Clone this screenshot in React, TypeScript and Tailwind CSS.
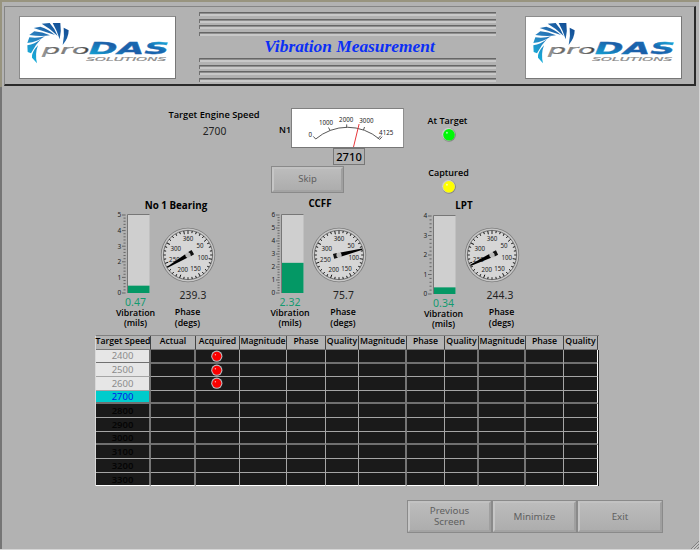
import React from "react";

const BLADES = [
  "M189 81 L204 89 Q204 112 186 133 Q192 106 189 81Z",
  "M156 67 L179 67 Q183 92 177 116 Q170 92 156 67Z",
  "M123 69 L147 67 Q163 84 171 106 Q150 84 123 69Z",
  "M99 82 L119 78 Q145 86 163 103 Q135 94 99 82Z",
  "M86 103 L101 92 Q125 93 148 104 Q120 108 86 103Z",
  "M80 127 L86 110 Q112 113 133 107 Q110 124 80 127Z",
  "M81 154 L80 134 Q102 131 121 115 Q104 132 91 158Z",
  "M94 171 Q92 155 112 134 Q102 160 109 188Z",
];

function Logo({ id }: { id: string }) {
  const f = "'DejaVu Sans', sans-serif";
  return (
    <div className="h-[63px] w-[157px] shrink-0 border border-t-[#8c8c8c] border-l-[#8c8c8c] border-r-[#777] border-b-[#777] bg-white">
      <svg width="155" height="61" viewBox="58 49 465 183">
        <defs>
          <linearGradient id={id + "b"} gradientUnits="userSpaceOnUse" x1="180" y1="70" x2="90" y2="185">
            <stop offset="0" stopColor="#124f96" />
            <stop offset="0.5" stopColor="#2a7dbd" />
            <stop offset="1" stopColor="#12b3dc" />
          </linearGradient>
          <linearGradient id={id + "d"} x1="0" y1="0.9" x2="1" y2="0.3">
            <stop offset="0" stopColor="#12a9d8" />
            <stop offset="0.5" stopColor="#1c5ea8" />
            <stop offset="0.8" stopColor="#1769b2" />
            <stop offset="1" stopColor="#1a9bd0" />
          </linearGradient>
          <linearGradient id={id + "p"} x1="0" y1="0" x2="1" y2="0">
            <stop offset="0" stopColor="#a8a8a8" />
            <stop offset="0.3" stopColor="#606060" />
            <stop offset="0.6" stopColor="#999" />
            <stop offset="1" stopColor="#333" />
          </linearGradient>
        </defs>
        {BLADES.map((d) => (
          <path key={d} d={d} fill={`url(#${id}b)`} />
        ))}
        <g transform="translate(124 160) scale(1.95 1)">
          <text x="0" y="0" fontFamily={f} fontStyle="italic" fontSize="39" textLength="73" lengthAdjust="spacingAndGlyphs" fill={`url(#${id}p)`} stroke="#777" strokeWidth="0.7">pro</text>
        </g>
        <g transform="translate(264 161) scale(2.2 1)">
          <text x="0" y="0" fontFamily={f} fontStyle="italic" fontWeight="bold" fontSize="46" textLength="110" lengthAdjust="spacingAndGlyphs" fill={`url(#${id}d)`} stroke={`url(#${id}d)`} strokeWidth="0.8">DAS</text>
        </g>
        <g transform="translate(257 182) scale(2 1)">
          <text x="0" y="0" fontFamily={f} fontStyle="italic" fontSize="18" textLength="120" lengthAdjust="spacingAndGlyphs" fill="#888" stroke="#909090" strokeWidth="0.6">SOLUTIONS</text>
        </g>
      </svg>
    </div>
  );
}

function Grooves() {
  return (
    <div className="flex flex-col gap-[2.6px]">
      {[0, 1, 2, 3].map((i) => (
        <div key={i} className="flex h-[4px] w-[297px] flex-col border-l border-[#707070] bg-[#c8c8c8]">
          <div className="h-px bg-[#666]" />
          <div className="h-px bg-[#8e8e8e]" />
        </div>
      ))}
    </div>
  );
}

function Led({ className, color }: { className?: string; color: string }) {
  return (
    <svg className={className} width="16" height="16" viewBox="0 0 16 16">
      <circle cx="8" cy="8.3" r="7.4" fill="#858585" />
      <circle cx="7.4" cy="7.7" r="6.9" fill="#cdcdcd" />
      <circle cx="8" cy="8.3" r="6.2" fill={color} />
      <circle cx="5.8" cy="6.1" r="1" fill="#fff" opacity="0.65" />
    </svg>
  );
}

function Meter() {
  const labels: [number, number, string][] = [
    [18.7, 26.7, "0"],
    [34.5, 14.3, "1000"],
    [54.7, 12, "2000"],
    [74.9, 12.8, "3000"],
    [94.7, 24.8, "4125"],
  ];
  return (
    <div className="h-[40px] w-[113px] border border-t-[#808080] border-l-[#808080] border-r-[#8e8e8e] border-b-[#777] bg-white">
      <svg width="111" height="38" viewBox="0.5 1 111 38">
        <path d="M24.2 31 A49 49 0 0 1 87.8 31" fill="none" stroke="#444" strokeWidth="0.9" />
        <path d="M24.2 31 l-2.4 -2.6 M38.6 22.5 l-1.6 -3 M55.2 19.4 v-3 M72 22 l1 -3 M86.6 30.6 l2.6 -2.9 M88 31.6 l2.6 -2.9" stroke="#444" strokeWidth="0.9" />
        {labels.map(([x, y, t]) => (
          <text key={t} x={x} y={y + 2.4} textAnchor="middle" fontFamily="'Noto Sans', sans-serif" fontSize="6.2" fill="#222">{t}</text>
        ))}
        <path d="M62 39 L67.6 16" stroke="#e8383c" strokeWidth="1" />
      </svg>
    </div>
  );
}

function Tank({ max, value, height }: { max: number; value: number; height: number }) {
  const ticks = Array.from({ length: max * 5 + 1 }, (_, i) => i);
  const py = (v: number) => 4 + height - (v / max) * height;
  return (
    <svg width="34" height={height + 8} viewBox={`0 0 34 ${height + 8}`}>
      {ticks.map((i) => (
        <line key={i} x1={i % 5 ? 7.5 : 6} x2="9.6" y1={py(i / 5)} y2={py(i / 5)} stroke="#333" strokeWidth="0.6" />
      ))}
      {Array.from({ length: max + 1 }, (_, i) => (
        <text key={i} x="5.2" y={py(i) + 2.3} textAnchor="end" fontFamily="'Noto Sans', sans-serif" fontSize="6.5" fill="#222">{i}</text>
      ))}
      <rect x="11.5" y="3.5" width="22" height={height + 0.5} fill="#cfcfcf" />
      <path d={`M11.5 ${height + 4} V3.5 H33.5`} fill="none" stroke="#777" strokeWidth="1" />
      <rect x="12" y={py(value)} width="21.5" height={height + 4 - py(value)} fill="#049865" />
    </svg>
  );
}

const DIAL_LABELS: [number, number, string][] = [
  [0, -16.2, "360"],
  [12, -9.3, "50"],
  [14.8, 2.7, "100"],
  [7.6, 13.2, "150"],
  [-5.2, 14.7, "200"],
  [-13.6, 5, "250"],
  [-12.2, -6.5, "300"],
];

function Dial({ angle }: { angle: number }) {
  return (
    <svg width="56" height="56" viewBox="-28 -28 56 56">
      <circle r="27.2" fill="#7c7c7c" />
      <circle r="26.4" fill="#c9c9c9" />
      <circle r="24.6" fill="#d6d6d6" stroke="#666" strokeWidth="0.9" />
      {Array.from({ length: 36 }, (_, i) => (
        <line key={i} x1="0" x2="0" y1="-24.4" y2={i % 5 ? -22.2 : -21} stroke="#111" strokeWidth="0.9" transform={`rotate(${i * 10})`} />
      ))}
      {DIAL_LABELS.map(([x, y, t]) => (
        <text key={t} x={x} y={y + 2.3} textAnchor="middle" fontFamily="'Noto Sans', sans-serif" fontSize="6.2" fill="#222">{t}</text>
      ))}
      <g transform={`rotate(${angle})`}>
        <path d="M-0.6 -24 L0.6 -24 L2.1 -2 L-2.1 -2Z" fill="#000" />
        <rect x="-2.5" y="1.8" width="5" height="3.8" fill="#111" />
      </g>
      <circle r="2.6" fill="#bbb" />
    </svg>
  );
}

function Channel(p: {
  title: string; max: number; value: number; phase: string; angle: number; height: number;
  top: string; titleCls: string; dialCls: string; phaseCls: string; capCls: string; vibCls: string;
}) {
  return (
    <div className={"flex w-[110px] shrink-0 flex-col " + p.top}>
      <div className={"h-[11px] text-center font-['Open_Sans',sans-serif] text-[9.8px] leading-[11px] font-bold whitespace-nowrap " + p.titleCls}>{p.title}</div>
      <div className="flex">
        <div className="flex w-[48px] shrink-0 flex-col">
          <Tank max={p.max} value={p.value} height={p.height} />
          <div className={"h-[11px] text-center text-[10.5px] leading-[11px] text-[#149a70] " + p.vibCls}>{p.value}</div>
          <div className={"text-center font-['Open_Sans',sans-serif] text-[8.8px] leading-[10px] font-semibold " + p.vibCls}>
            Vibration<br />(mils)
          </div>
        </div>
        <div className={"flex shrink-0 flex-col items-center " + p.dialCls}>
          <Dial angle={p.angle} />
          <div className={"mt-[7px] h-[11px] text-[10.3px] leading-[11px] tracking-[0.15px] text-[#222] " + p.phaseCls}>{p.phase}</div>
          <div className={"mt-[6px] text-center font-['Open_Sans',sans-serif] text-[8.8px] leading-[10.5px] font-semibold " + p.capCls}>
            Phase<br />(degs)
          </div>
        </div>
      </div>
    </div>
  );
}

const HEADS = ["Target Speed", "Actual", "Acquired", "Magnitude", "Phase", "Quality", "Magnitude", "Phase", "Quality", "Magnitude", "Phase", "Quality"];
const SPEEDS = [2400, 2500, 2600, 2700, 2800, 2900, 3000, 3100, 3200, 3300];
const COLS = "grid grid-cols-[55px_45px_44px_47px_39px_33px_48px_38px_34px_47px_38px_34px]";
const THICK_ROWS = [0, 3, 6];

function speedClass(i: number) {
  if (i < 3) return "bg-[#e6e6e6] text-[#8c8c8c]";
  if (i === 3) return "bg-[#00cccc] text-[#0018e8]";
  return "bg-[#1a1a1a] text-[#050505] font-semibold";
}

function DataTable() {
  return (
    <div className="ml-[95px] w-[504px] border-t border-l border-t-[#808080] border-l-[#d8d8d8] bg-[#1a1a1a]">
      <div className={COLS + " h-[13.5px] bg-[#b4b4b4]"}>
        {HEADS.map((h, i) => (
          <div key={i} className="flex h-[13.5px] items-center justify-center border-r border-b border-r-[#444] border-b-[#777] pb-px font-['Open_Sans',sans-serif] text-[8.7px] leading-[11px] font-semibold whitespace-nowrap">{h}</div>
        ))}
      </div>
      {SPEEDS.map((s, r) => (
        <div key={s} className={COLS + " h-[13.7px]"}>
          {HEADS.map((_, c) => (
            <div
              key={c}
              className={
                "flex items-center justify-center border-r " +
                (r === 9 ? "border-b border-b-white " : THICK_ROWS.includes(r) ? "border-b-2 border-b-[#707070] " : "border-b border-b-[#a5a5a5] ") +
                (c === 11 ? "border-r-white " : [0, 1, 6, 8, 9].includes(c) ? "border-r-2 border-r-[#757575] " : "border-r-[#a5a5a5] ") +
                (c === 0 ? speedClass(r) : "")
              }
            >
              {c === 0 && <span className="text-[9.5px] leading-[11px]">{s}</span>}
              {c === 2 && r < 3 && (
                <svg width="12" height="12" viewBox="0 0 12 12" className="-ml-[1px] shrink-0 overflow-visible">
                  <circle cx="5.8" cy="6.2" r="5.6" fill="#b9bcc0" />
                  <circle cx="5.8" cy="6.2" r="4.5" fill="#fa0000" />
                  <circle cx="4.4" cy="4.8" r="0.7" fill="#ffaaaa" />
                </svg>
              )}
            </div>
          ))}
        </div>
      ))}
    </div>
  );
}

function Btn({ children, className }: { children: React.ReactNode; className: string }) {
  return (
    <div className={"flex items-center justify-center border border-[#8a8a8a] text-center text-[#606060] " + className}>
      <div className="flex h-full w-full items-center justify-center border-2 border-t-[#c2c2c2] border-l-[#c6c6c6] border-r-[#9f9f9f] border-b-[#a3a3a3] bg-linear-to-b from-[#bcbcbc] to-[#adadad]">{children}</div>
    </div>
  );
}

export default function App() {
  return (
    <div className="flex h-[550px] w-[700px] flex-col overflow-hidden border-r border-b border-[#d6d6d6] bg-[#b2b2b2] font-['Noto_Sans',sans-serif] text-black">
      <header className="h-[87px] shrink-0 border-t-2 border-l-2 border-[#98947f] pt-[4px] pl-[2px]">
        <div className="flex h-[80px] w-[692px] items-start border-t border-r-2 border-b-2 border-l border-t-[#858585] border-l-[#858585] border-r-[#2a2a2a] border-b-[#2a2a2a]">
          <div className="mt-[8.5px] ml-[14px]"><Logo id="l" /></div>
          <div className="mt-[5px] ml-[23px] flex w-[297px] flex-col">
            <Grooves />
            <h1 className="flex h-[22.2px] items-center justify-center pl-[4px] font-['Liberation_Serif',serif] text-[17.4px] leading-none font-bold whitespace-nowrap text-[#0b2ff5] italic">Vibration Measurement</h1>
            <Grooves />
          </div>
          <div className="mt-[8.5px] ml-[29px]"><Logo id="r" /></div>
        </div>
      </header>
      <main className="flex h-[462px] shrink-0 flex-col border-l-2 border-l-[#757575]">
        <div className="-ml-[2px] flex h-[107px] shrink-0 pt-[21px]">
          <div className="ml-[158px] w-[112px] pt-[1px] text-center">
            <div className="font-['Open_Sans',sans-serif] text-[9.3px] leading-[12px] font-semibold whitespace-nowrap">Target Engine Speed</div>
            <div className="mt-[4px] ml-px text-[10.3px] leading-[12px] text-[#222]">2700</div>
          </div>
          <div className="ml-[1px] flex w-[134px] flex-col">
            <div className="flex items-center">
              <div className="mt-[3px] ml-[8px] w-[12px] shrink-0 font-['Open_Sans',sans-serif] text-[8.8px] leading-[12px] font-semibold whitespace-nowrap">N1</div>
              <Meter />
            </div>
            <div className="ml-[62px] flex h-[17px] w-[32px] items-center justify-center border border-[#777] text-[11.2px] leading-[15px] font-medium">2710</div>
            <Btn className="mt-[1px] h-[27px] w-[73px] text-[9.5px]">Skip</Btn>
          </div>
          <div className="ml-[8px] flex w-[70px] flex-col items-center pt-[7px] font-['Open_Sans',sans-serif] text-[9px] leading-[12px] font-semibold">
            <div className="-ml-[1px]">At Target</div>
            <Led color="#00f808" className="ml-[2px]" />
            <div className="mt-[25px] ml-[1px]">Captured</div>
            <Led color="#ffff00" className="ml-[2px]" />
          </div>
        </div>
        <div className="-ml-[2px] flex h-[141px] shrink-0 items-start pl-[116px]">
          <Channel title="No 1 Bearing" max={5} value={0.47} phase="239.3" angle={239.3} height={78} top="pt-[6px]" titleCls="ml-[10px]" vibCls="-ml-[9px]" dialCls="-ml-[4px] pt-[16px]" phaseCls="ml-[10px]" capCls="-ml-[1px]" />
          <Channel title="CCFF" max={6} value={2.32} phase="75.7" angle={75.7} height={78} top="ml-[44px] pt-[4px]" titleCls="ml-[-10px] mb-[2px]" vibCls="-ml-[8px]" dialCls="-ml-[7px] pt-[16px]" phaseCls="ml-[9px]" capCls="ml-[8px]" />
          <Channel title="LPT" max={4} value={0.34} phase="244.3" angle={244.3} height={78} top="ml-[42px] pt-[6px]" titleCls="-ml-[26px] mb-[1px]" vibCls="-ml-[5px]" dialCls="-ml-[6px] pt-[15px]" phaseCls="ml-[16px]" capCls="ml-[19px]" />
        </div>
        <div className="-ml-[2px]"><DataTable /></div>
        <footer className="-ml-[2px] mt-[13.5px] flex pl-[407px] text-[9.8px] leading-[11px]">
          <Btn className="h-[33px] w-[85px]"><span>Previous<br />Screen</span></Btn>
          <Btn className="h-[33px] w-[85px]">Minimize</Btn>
          <Btn className="h-[33px] w-[86px]">Exit</Btn>
        </footer>
        <svg className="mt-auto ml-auto" width="8" height="8" viewBox="0 0 8 8">
          <path d="M0 8 L8 0 M3 8 L8 3 M6 8 L8 6" stroke="#808080" strokeWidth="1" />
          <path d="M1.4 8 L8 1.4 M4.4 8 L8 4.4" stroke="#ddd" strokeWidth="0.8" />
        </svg>
      </main>
    </div>
  );
}
